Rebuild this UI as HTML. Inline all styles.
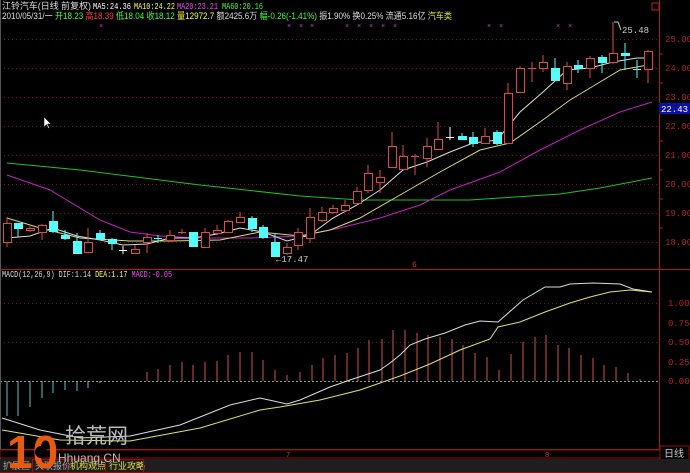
<!DOCTYPE html>
<html><head><meta charset="utf-8"><style>
html,body{margin:0;padding:0;background:#000;width:690px;height:473px;overflow:hidden}
svg{display:block}
text{font-family:"Liberation Mono","Noto Sans CJK SC",monospace;font-size:9px}
text.c{font-family:"Liberation Sans","Noto Sans CJK SC",sans-serif}
</style></head><body>
<svg width="690" height="473" viewBox="0 0 690 473" xmlns="http://www.w3.org/2000/svg">
<rect width="690" height="473" fill="#000"/>
<g stroke="#7a1010" stroke-dasharray="1,3" stroke-width="1">
<line x1="0" y1="39.5" x2="659" y2="39.5"/><line x1="0" y1="68.5" x2="659" y2="68.5"/><line x1="0" y1="97.5" x2="659" y2="97.5"/><line x1="0" y1="126.5" x2="659" y2="126.5"/><line x1="0" y1="155.5" x2="659" y2="155.5"/><line x1="0" y1="184.5" x2="659" y2="184.5"/><line x1="0" y1="213.5" x2="659" y2="213.5"/><line x1="0" y1="242.5" x2="659" y2="242.5"/>
<line x1="0" y1="303.5" x2="659" y2="303.5"/><line x1="0" y1="342.5" x2="659" y2="342.5"/>
</g>
<line x1="0" y1="381.5" x2="659" y2="381.5" stroke="#7aa0a0" stroke-dasharray="2,2"/>
<line x1="659.5" y1="0" x2="659.5" y2="460" stroke="#b01818"/>
<line x1="0" y1="269.5" x2="690" y2="269.5" stroke="#b01818"/>
<line x1="0" y1="449.5" x2="690" y2="449.5" stroke="#b01818"/>
<line x1="0.5" y1="0" x2="0.5" y2="460" stroke="#555"/>
<rect x="652" y="3" width="7" height="7" fill="none" stroke="#c02020"/>
<g fill="#b02020">
<text x="665" y="42">25.00</text><text x="665" y="71">24.00</text><text x="665" y="100">23.00</text><text x="665" y="129">22.00</text><text x="665" y="158">21.00</text><text x="665" y="187">20.00</text><text x="665" y="216">19.00</text><text x="665" y="245">18.00</text>
<text x="668" y="306">1.00</text><text x="668" y="326">0.75</text><text x="668" y="345">0.50</text><text x="668" y="365">0.25</text><text x="668" y="384">0.00</text>
</g>
<g stroke="#b01818"><line x1="659" y1="54" x2="663" y2="54"/><line x1="659" y1="83" x2="663" y2="83"/><line x1="659" y1="112" x2="663" y2="112"/><line x1="659" y1="141" x2="663" y2="141"/><line x1="659" y1="170" x2="663" y2="170"/><line x1="659" y1="199" x2="663" y2="199"/><line x1="659" y1="228" x2="663" y2="228"/></g>
<rect x="659" y="103" width="31" height="11" fill="#1010a0"/>
<text x="661" y="112" fill="#fff">22.43</text>
<!-- header -->
<text class="c" x="2" y="9" fill="#ddd" textLength="89" lengthAdjust="spacingAndGlyphs">江铃汽车(日线 前复权)</text>
<text x="93" y="9" fill="#fff" textLength="38" lengthAdjust="spacingAndGlyphs">MA5:24.36</text>
<text x="134" y="9" fill="#ffff50" textLength="41" lengthAdjust="spacingAndGlyphs">MA10:24.22</text>
<text x="177" y="9" fill="#ff40ff" textLength="41" lengthAdjust="spacingAndGlyphs">MA20:23.21</text>
<text x="222" y="9" fill="#40ff40" textLength="41" lengthAdjust="spacingAndGlyphs">MA60:20.16</text>
<text class="c" x="2" y="19" fill="#ddd" textLength="450" lengthAdjust="spacingAndGlyphs">2010/05/31/一 <tspan fill="#40ff40">开18.23</tspan> <tspan fill="#ff4040">高18.39</tspan> <tspan fill="#40ff40">低18.04</tspan> <tspan fill="#40ff40">收18.12</tspan> <tspan fill="#ffff40">量12972.7</tspan> 额2425.6万 <tspan fill="#40ff40">幅-0.26(-1.41%)</tspan> 振1.90% 换0.25% 流通5.16亿 <tspan fill="#e0e040">汽车类</tspan></text>
<g fill="#c040c0" style="font-size:7px"><text x="99" y="28" style="font-size:7px">×</text><text x="287" y="28" style="font-size:7px">×</text><text x="299" y="28" style="font-size:7px">×</text><text x="310" y="28" style="font-size:7px">×</text><text x="345" y="28" style="font-size:7px">×</text><text x="357" y="28" style="font-size:7px">×</text><text x="369" y="28" style="font-size:7px">×</text><text x="381" y="28" style="font-size:7px">×</text><text x="393" y="28" style="font-size:7px">×</text><text x="487" y="28" style="font-size:7px">×</text><text x="499" y="28" style="font-size:7px">×</text><text x="556" y="28" style="font-size:7px">×</text><text x="568" y="28" style="font-size:7px">×</text></g>
<polyline fill="none" stroke="#20c020" points="7,163 80,170 200,185 300,196 360,200 470,200 560,194 600,188 652,178"/>
<polyline fill="none" stroke="#c020c0" points="7,175 50,190 100,220 130,232 160,236 200,238 250,238 300,236 340,228 380,218 420,205 450,190 500,172 540,150 580,130 620,112 652,102"/>
<polyline fill="none" stroke="#d8d880" points="7,218 40,228 80,238 130,241 170,241 220,240 260,232 300,236 330,230 360,218 400,195 440,172 480,150 510,143 540,122 570,100 600,82 620,70 648,65"/>
<polyline fill="none" stroke="#ddd" points="7,238 30,236 53,228 77,236 100,240 123,245 147,244 170,238 193,238 217,234 240,228 263,232 287,241 310,235 333,218 357,205 380,190 403,170 427,162 450,152 473,143 497,140 520,112 543,92 567,70 590,68 613,62 637,58 648,58"/>
<g stroke="#e04848" fill="#000" stroke-width="1">
<line x1="7" y1="217" x2="7" y2="247"/><rect x="3.5" y="223.5" width="8" height="19"/>
<line x1="30" y1="226" x2="30" y2="232"/><rect x="26.5" y="228.5" width="8" height="2"/>
<line x1="42" y1="224" x2="42" y2="240"/><rect x="38.5" y="225.5" width="8" height="7"/>
<line x1="88" y1="228" x2="88" y2="252"/><rect x="84.5" y="242.5" width="8" height="10"/>
<line x1="135" y1="245" x2="135" y2="254"/><rect x="131.5" y="249.5" width="8" height="4"/>
<line x1="147" y1="233" x2="147" y2="253"/><rect x="143.5" y="237.5" width="8" height="5"/>
<line x1="170" y1="230" x2="170" y2="242"/><rect x="166.5" y="235.5" width="8" height="5"/>
<line x1="182" y1="229" x2="182" y2="234"/><line x1="178" y1="232.5" x2="186" y2="232.5"/>
<line x1="205" y1="228" x2="205" y2="248"/><rect x="201.5" y="232.5" width="8" height="15"/>
<line x1="217" y1="225" x2="217" y2="235"/><rect x="213.5" y="230.5" width="8" height="3"/>
<line x1="228" y1="220" x2="228" y2="232"/><rect x="224.5" y="221.5" width="8" height="11"/>
<line x1="240" y1="212" x2="240" y2="223"/><rect x="236.5" y="217.5" width="8" height="5"/>
<line x1="287" y1="243" x2="287" y2="255"/><rect x="283.5" y="247.5" width="8" height="6"/>
<line x1="298" y1="228" x2="298" y2="250"/><rect x="294.5" y="232.5" width="8" height="13"/>
<line x1="310" y1="208" x2="310" y2="243"/><rect x="306.5" y="217.5" width="8" height="21"/>
<line x1="322" y1="207" x2="322" y2="222"/><rect x="318.5" y="212.5" width="8" height="8"/>
<line x1="333" y1="205" x2="333" y2="214"/><rect x="329.5" y="208.5" width="8" height="4"/>
<line x1="345" y1="200" x2="345" y2="212"/><rect x="341.5" y="205.5" width="8" height="5"/>
<line x1="357" y1="187" x2="357" y2="205"/><rect x="353.5" y="191.5" width="8" height="12"/>
<line x1="368" y1="165" x2="368" y2="193"/><rect x="364.5" y="173.5" width="8" height="17"/>
<line x1="380" y1="170" x2="380" y2="193"/><rect x="376.5" y="177.5" width="8" height="5"/>
<line x1="392" y1="132" x2="392" y2="168"/><rect x="388.5" y="146.5" width="8" height="21"/>
<line x1="403" y1="145" x2="403" y2="170"/><rect x="399.5" y="156.5" width="8" height="13"/>
<line x1="415" y1="154" x2="415" y2="175"/><line x1="411" y1="156.5" x2="419" y2="156.5"/>
<line x1="427" y1="138" x2="427" y2="167"/><rect x="423.5" y="146.5" width="8" height="12"/>
<line x1="438" y1="122" x2="438" y2="150"/><rect x="434.5" y="139.5" width="8" height="10"/>
<line x1="485" y1="128" x2="485" y2="143"/><rect x="481.5" y="136.5" width="8" height="7"/>
<line x1="508" y1="83" x2="508" y2="143"/><rect x="504.5" y="93.5" width="8" height="50"/>
<line x1="520" y1="66" x2="520" y2="93"/><rect x="516.5" y="68.5" width="8" height="24"/>
<line x1="532" y1="62" x2="532" y2="82"/><line x1="528" y1="68.5" x2="536" y2="68.5"/>
<line x1="543" y1="55" x2="543" y2="72"/><rect x="539.5" y="62.5" width="8" height="6"/>
<line x1="567" y1="62" x2="567" y2="90"/><rect x="563.5" y="66.5" width="8" height="17"/>
<line x1="590" y1="56" x2="590" y2="78"/><rect x="586.5" y="58.5" width="8" height="10"/>
<line x1="613" y1="22" x2="613" y2="64"/><rect x="609.5" y="53.5" width="8" height="9"/>
<line x1="648" y1="50" x2="648" y2="83"/><rect x="644.5" y="51.5" width="8" height="18"/>
</g>
<g fill="#54fcfc" stroke="#54fcfc">
<line x1="18" y1="223" x2="18" y2="237"/><rect x="14.5" y="223.5" width="8" height="5"/>
<line x1="53" y1="211" x2="53" y2="233"/><rect x="49.5" y="221.5" width="8" height="10"/>
<line x1="65" y1="230" x2="65" y2="240"/><rect x="61.5" y="235.5" width="8" height="3"/>
<line x1="77" y1="233" x2="77" y2="253"/><rect x="73.5" y="241.5" width="8" height="12"/>
<line x1="100" y1="230" x2="100" y2="240"/><rect x="96.5" y="233.5" width="8" height="6"/>
<line x1="112" y1="238" x2="112" y2="250"/><rect x="108.5" y="239.5" width="8" height="4"/>
<line x1="158" y1="235" x2="158" y2="243"/><line x1="154" y1="238.5" x2="162" y2="238.5"/>
<line x1="193" y1="232" x2="193" y2="247"/><rect x="189.5" y="232.5" width="8" height="14"/>
<line x1="252" y1="216" x2="252" y2="232"/><rect x="248.5" y="218.5" width="8" height="10"/>
<line x1="263" y1="225" x2="263" y2="239"/><rect x="259.5" y="227.5" width="8" height="10"/>
<line x1="275" y1="233" x2="275" y2="257"/><rect x="271.5" y="242.5" width="8" height="14"/>
<line x1="462" y1="133" x2="462" y2="140"/><rect x="458.5" y="136.5" width="8" height="3"/>
<line x1="473" y1="132" x2="473" y2="147"/><rect x="469.5" y="137.5" width="8" height="6"/>
<line x1="497" y1="130" x2="497" y2="145"/><rect x="493.5" y="132.5" width="8" height="11"/>
<line x1="555" y1="58" x2="555" y2="80"/><rect x="551.5" y="68.5" width="8" height="12"/>
<line x1="578" y1="60" x2="578" y2="73"/><rect x="574.5" y="65.5" width="8" height="3"/>
<line x1="602" y1="55" x2="602" y2="73"/><rect x="598.5" y="57.5" width="8" height="5"/>
<line x1="625" y1="43" x2="625" y2="70"/><rect x="621.5" y="53.5" width="8" height="2"/>
<line x1="637" y1="60" x2="637" y2="78"/><line x1="633" y1="69.5" x2="641" y2="69.5"/>
</g>
<g stroke="#fff"><line x1="123" y1="246" x2="123" y2="254"/><line x1="119" y1="250.5" x2="127" y2="250.5"/><line x1="450" y1="127" x2="450" y2="140"/><line x1="446" y1="137.5" x2="454" y2="137.5"/></g>
<path d="M614 22 L618 22 L621 30" stroke="#ccc" fill="none"/>
<text x="622" y="33" fill="#ccc">25.48</text>
<text x="276" y="262" fill="#ccc">←17.47</text>
<text x="412" y="267" fill="#e03030" style="font-size:8px">6</text>
<!-- MACD -->
<text x="2" y="277" fill="#ddd" textLength="170" lengthAdjust="spacingAndGlyphs">MACD(12,26,9) DIF:1.14 <tspan fill="#ffff50">DEA:1.17</tspan> <tspan fill="#ff40ff">MACD:-0.05</tspan></text>
<g stroke="#60c0c0"><line x1="7" y1="381" x2="7" y2="416"/><line x1="18" y1="381" x2="18" y2="416"/><line x1="30" y1="381" x2="30" y2="407"/><line x1="42" y1="381" x2="42" y2="398"/><line x1="53" y1="381" x2="53" y2="393"/><line x1="65" y1="381" x2="65" y2="390"/><line x1="77" y1="381" x2="77" y2="391"/><line x1="88" y1="381" x2="88" y2="388"/><line x1="100" y1="381" x2="100" y2="383"/></g>
<g stroke="#d05050"><line x1="147" y1="381" x2="147" y2="372"/><line x1="158" y1="381" x2="158" y2="369"/><line x1="170" y1="381" x2="170" y2="365"/><line x1="182" y1="381" x2="182" y2="362"/><line x1="193" y1="381" x2="193" y2="365"/><line x1="205" y1="381" x2="205" y2="362"/><line x1="217" y1="381" x2="217" y2="361"/><line x1="228" y1="381" x2="228" y2="355"/><line x1="240" y1="381" x2="240" y2="352"/><line x1="252" y1="381" x2="252" y2="352"/><line x1="263" y1="381" x2="263" y2="360"/><line x1="275" y1="381" x2="275" y2="370"/><line x1="287" y1="381" x2="287" y2="375"/><line x1="300" y1="381" x2="300" y2="372"/><line x1="312" y1="381" x2="312" y2="365"/><line x1="323" y1="381" x2="323" y2="358"/><line x1="335" y1="381" x2="335" y2="355"/><line x1="347" y1="381" x2="347" y2="353"/><line x1="358" y1="381" x2="358" y2="348"/><line x1="369" y1="381" x2="369" y2="340"/><line x1="382" y1="381" x2="382" y2="339"/><line x1="393" y1="381" x2="393" y2="330"/><line x1="405" y1="381" x2="405" y2="330"/><line x1="417" y1="381" x2="417" y2="333"/><line x1="428" y1="381" x2="428" y2="335"/><line x1="440" y1="381" x2="440" y2="337"/><line x1="452" y1="381" x2="452" y2="339"/><line x1="463" y1="381" x2="463" y2="345"/><line x1="475" y1="381" x2="475" y2="353"/><line x1="487" y1="381" x2="487" y2="357"/><line x1="499" y1="381" x2="499" y2="370"/><line x1="511" y1="381" x2="511" y2="354"/><line x1="523" y1="381" x2="523" y2="342"/><line x1="535" y1="381" x2="535" y2="337"/><line x1="546" y1="381" x2="546" y2="335"/><line x1="558" y1="381" x2="558" y2="345"/><line x1="569" y1="381" x2="569" y2="348"/><line x1="581" y1="381" x2="581" y2="355"/><line x1="593" y1="381" x2="593" y2="358"/><line x1="604" y1="381" x2="604" y2="365"/><line x1="616" y1="381" x2="616" y2="367"/><line x1="628" y1="381" x2="628" y2="373"/><line x1="640" y1="381" x2="640" y2="379"/></g>
<polyline fill="none" stroke="#ddd" points="2,418 40,430 80,438 130,436 180,425 230,405 260,398 287,404 300,400 330,387 350,380 380,370 390,363 400,355 410,345 425,339 445,333 465,325 480,321 498,322 523,300 545,287 560,287 570,284 593,283 620,284 633,289 652,292"/>
<polyline fill="none" stroke="#e0e070" points="2,430 60,440 130,441 200,428 260,410 280,407 320,400 360,390 400,376 430,364 460,350 490,339 498,327 520,322 545,312 570,303 590,297 610,292 630,290 652,292"/>
<rect x="0" y="450" width="660" height="8" fill="#000" stroke="#901010"/>
<text x="286" y="457" fill="#d03030" style="font-size:7px">7</text>
<text x="545" y="457" fill="#d03030" style="font-size:7px">8</text>
<rect x="660" y="446" width="29" height="14" fill="#000" stroke="#901010"/>
<text class="c" x="664" y="457" fill="#ccc" style="font-size:10px">日线</text>
<rect x="0" y="459" width="690" height="14" fill="#1e1e1e"/>
<line x1="0" y1="472.5" x2="690" y2="472.5" stroke="#901010"/>
<text class="c" x="3" y="469" fill="#aaa">扩展区</text><text class="c" x="35" y="469" fill="#aaa">关联报价</text><text class="c" x="70" y="469" fill="#e0e040">机构观点</text><text class="c" x="109" y="469" fill="#e0e040">行业攻略</text>
<g stroke="#901010" fill="none"><rect x="32.5" y="459.5" width="35" height="13"/><rect x="67.5" y="459.5" width="38" height="13"/><rect x="105.5" y="459.5" width="38" height="13"/></g>
<!-- watermark -->
<text class="c" x="7" y="468" fill="#e85a10" style="font-size:46px;font-weight:bold;font-family:'Liberation Sans',sans-serif">10</text>
<circle cx="41" cy="452" r="6" fill="#000"/>
<text class="c" x="65" y="443" fill="#bbb" style="font-size:21px">拾荒网</text>
<text class="c" x="58" y="462" fill="#bbb" style="font-size:12px">Hhuang.CN</text>
<path d="M44 117 L44 127 L46.5 124.5 L48.5 128.5 L49.5 128 L47.5 124 L51 124 Z" stroke="#000" stroke-width="0.5" fill="#fff"/>
</svg>
</body></html>
